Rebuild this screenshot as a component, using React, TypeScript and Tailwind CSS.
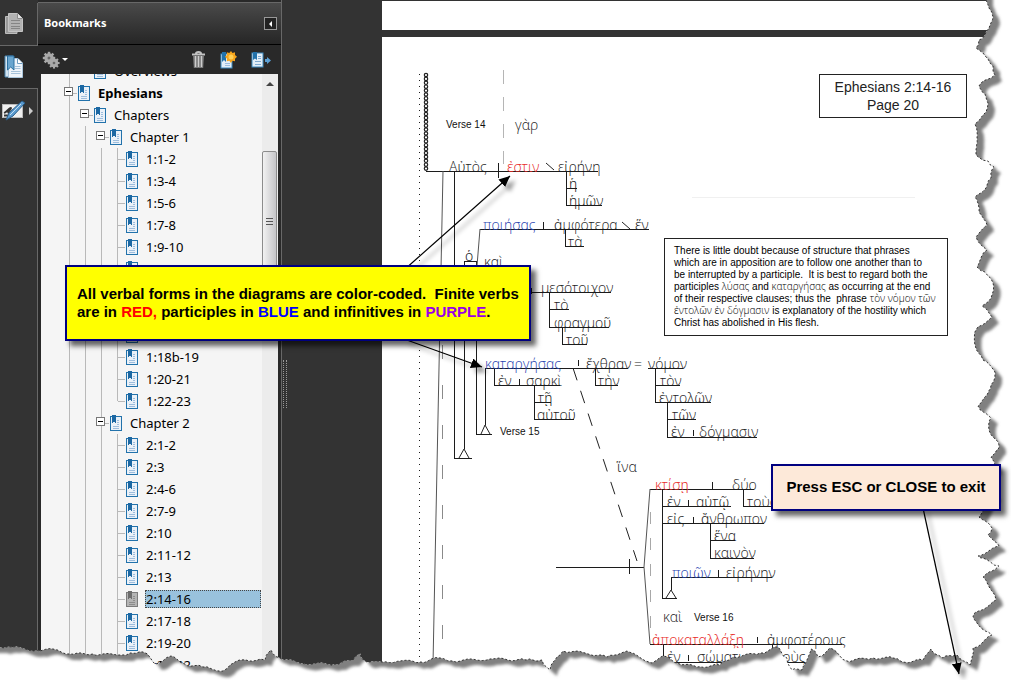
import type { ReactNode } from 'react';

type Guide = 'line' | 'none' | 'branch' | 'last' | 'open' | 'openFirst';

type Bookmark = {
  label: string;
  guides: Guide[];
  bold?: boolean;
  selected?: boolean;
};

const leaf = (label: string, last = false): Bookmark => ({
  label,
  guides: ['line', 'line', 'line', last ? 'last' : 'branch'],
});

const bookmarks: Bookmark[] = [
  { label: 'Overviews', guides: ['line', 'none'] },
  { label: 'Ephesians', guides: ['open'], bold: true },
  { label: 'Chapters', guides: ['line', 'openFirst'] },
  { label: 'Chapter 1', guides: ['line', 'line', 'openFirst'] },
  leaf('1:1-2'),
  leaf('1:3-4'),
  leaf('1:5-6'),
  leaf('1:7-8'),
  leaf('1:9-10'),
  leaf(''),
  leaf(''),
  leaf(''),
  leaf(''),
  leaf('1:18b-19'),
  leaf('1:20-21'),
  leaf('1:22-23', true),
  { label: 'Chapter 2', guides: ['line', 'line', 'open'] },
  leaf('2:1-2'),
  leaf('2:3'),
  leaf('2:4-6'),
  leaf('2:7-9'),
  leaf('2:10'),
  leaf('2:11-12'),
  leaf('2:13'),
  { ...leaf('2:14-16'), selected: true },
  leaf('2:17-18'),
  leaf('2:19-20'),
  leaf('2:21-22'),
];

const RED = '#e8291f';
const BLUE = '#1f42b0';
const INK = '#1a1a1a';

// [text, x, rule line below it, colour]
const words: [string, number, number, string?][] = [
  ['γὰρ', 515, 129],
  ['Αὐτὸς', 449, 171],
  ['ἐστιν', 507, 171, RED],
  ['εἰρήνη', 558, 171],
  ['ἡ', 569, 188],
  ['ἡμῶν', 569, 205],
  ['ποιήσας', 483, 229, BLUE],
  ['ἀμφότερα', 554, 229],
  ['ἕν', 635, 229],
  ['τὰ', 568, 246],
  ['ὁ', 465, 260],
  ['καὶ', 484, 266],
  ['μεσότοιχον', 541, 292],
  ['τὸ', 554, 309],
  ['φραγμοῦ', 554, 327],
  ['τοῦ', 566, 344],
  ['καταργήσας', 485, 368, BLUE],
  ['ἔχθραν', 586, 368],
  ['=', 634, 368],
  ['νόμον', 648, 368],
  ['ἐν', 498, 385],
  ['σαρκὶ', 526, 385],
  ['τὴν', 598, 385],
  ['τὸν', 660, 385],
  ['τῇ', 538, 402],
  ['αὐτοῦ', 537, 419],
  ['ἐντολῶν', 659, 402],
  ['τῶν', 672, 419],
  ['ἐν', 671, 436],
  ['δόγμασιν', 699, 436],
  ['ἵνα', 617, 471],
  ['κτίσῃ', 655, 489, RED],
  ['δύο', 732, 489],
  ['ἐν', 667, 506],
  ['αὐτῷ', 696, 506],
  ['τοὺς', 747, 506],
  ['εἰς', 667, 523],
  ['ἄνθρωπον', 701, 523],
  ['ἕνα', 714, 540],
  ['καινὸν', 714, 557],
  ['ποιῶν', 672, 577, BLUE],
  ['εἰρήνην', 726, 577],
  ['καὶ', 663, 621],
  ['ἀποκαταλλάξῃ', 652, 644, RED],
  ['ἀμφοτέρους', 767, 644],
  ['ἐν', 667, 661],
  ['σώματι', 697, 661],
  ['τοὺς', 776, 661],
];

const verses: [string, number, number][] = [
  ['Verse 14', 446, 128],
  ['Verse 15', 500, 435],
  ['Verse 16', 694, 621],
];

const strokes = [
  'M426 171H598M498 163V178M454 171V458H472M464 265V449M476 266V434H492M485 425V368H628',
  'M464 265V261H476V265M566 171V205H602M566 188H577M480 229H649M543 222V229M565 229V246H584',
  'M531 292H611M531 288V294M549 292V327H609M549 309H569M562 327V344H587',
  'M578 360V366M595 368V385H618M494 368V385H560M519 379V385M534 385V419H574M534 402H551',
  'M648 368H683M655 368V402H711M655 385H680M667 402V437H757M667 419H696M693 430V436',
  'M650 489H754M712 482V489M743 489V506H771M662 489V598H677M662 506H731M688 500V506M662 523H764M693 517V523',
  'M710 523V558H754M710 540H735M671 590V577H772M718 570V577M556 567H644M629 559V574',
  'M650 644H842M757 637V643M663 644V662H805M688 655V661M772 644V662',
];

const rightTear = [
  [986, 0], [989, 8], [993, 17], [990, 25], [986, 32], [979, 40], [976, 48], [986, 57], [993, 66],
  [995, 75], [979, 86], [985, 94], [988, 103], [986, 112], [975, 124], [977, 138], [976, 155],
  [988, 161], [994, 167], [991, 178], [986, 188], [975, 197], [979, 212], [987, 225], [976, 237],
  [987, 250], [977, 267], [985, 272], [993, 283], [992, 295], [982, 306], [992, 317], [976, 330],
  [975, 345], [983, 360], [995, 372], [991, 385], [987, 395], [978, 406], [991, 418], [989, 430],
  [998, 442], [999, 448], [991, 457], [995, 465], [982, 480], [994, 495], [979, 517], [992, 528],
  [988, 535], [999, 546], [978, 556], [999, 566], [983, 577], [996, 600], [973, 616], [977, 623],
  [992, 635], [973, 648], [970, 665],
];

const bottomTear = [
  [957, 655], [943, 658], [931, 649], [923, 660], [903, 662], [893, 658], [873, 658], [847, 661],
  [830, 648], [818, 657], [811, 649], [802, 670], [792, 670], [787, 658], [778, 647], [760, 653],
  [733, 657], [720, 665], [697, 667], [677, 663], [663, 656], [652, 663], [627, 651], [607, 657],
  [585, 653], [563, 651], [557, 657], [550, 670], [542, 660], [526, 660], [490, 659], [453, 661],
  [440, 658], [420, 662], [400, 661], [382, 662], [367, 662], [360, 653], [353, 660], [335, 664],
  [300, 663], [280, 658], [271, 650], [265, 660], [240, 660], [230, 665], [223, 671], [203, 667],
  [185, 664], [171, 656], [155, 664], [143, 652], [130, 653], [117, 655], [93, 654], [70, 654],
  [53, 649], [40, 651], [13, 647], [0, 647],
];

// Break each long edge into short uneven steps so that it looks like torn paper.
function jagged(points: number[][]) {
  const out: string[] = [];
  let n = 0;
  points.forEach(([x, y], i) => {
    out.push(`${x} ${y}`);
    const next = points[i + 1];
    if (!next) return;
    const steps = Math.max(1, Math.round(Math.hypot(next[0] - x, next[1] - y) / 4));
    for (let s = 1; s < steps; s++) {
      n++;
      const t = s / steps;
      const dx = Math.sin(n * 12.9) * 1.2;
      const dy = Math.cos(n * 7.3) * 1.2;
      out.push(`${(x + (next[0] - x) * t + dx).toFixed(1)} ${(y + (next[1] - y) * t + dy).toFixed(1)}`);
    }
  });
  return out.join('L');
}

const tearLine = jagged([...rightTear, ...bottomTear]);
const sheet = `M-20 -20H986L${tearLine}H-20Z`;
const outside = `M-20 -40H1040V720H-20ZM-20 -40H986L${tearLine}H-20Z`;

function BookmarkIcon({ muted = false }: { muted?: boolean }) {
  const edge = muted ? '#7b7b7b' : '#2272ab';
  const fill = muted ? '#b4b4b4' : '#eaf1f8';
  return (
    <svg className="h-4 w-3 shrink-0" viewBox="0 0 12 16" shapeRendering="crispEdges" aria-hidden="true">
      <rect x="0.5" y="1.5" width="11" height="14" fill={fill} stroke={edge} />
      <path d="M7 5.5H9M7 7.5H9M7 9.5H9M3 11.5H9M3 13.5H9" stroke={muted ? '#8c8c8c' : '#9dbddd'} />
      <path d="M2 0H6V8H5V7H3V8H2Z" fill={muted ? '#6c6c6c' : '#1c68a3'} />
    </svg>
  );
}

function GuideCell({ kind }: { kind: Guide }) {
  if (kind === 'none') return <span className="w-4" />;
  if (kind === 'open' || kind === 'openFirst') {
    return (
      <span className="relative flex w-4 items-center justify-end">
        {kind === 'open' && <span className="absolute inset-y-0 left-2 w-px bg-[#b9b9b9]" />}
        <span className="h-px w-2 bg-[#b9b9b9]" />
        <button
          type="button"
          aria-label="Collapse"
          className="absolute top-[5px] left-[3px] flex h-[9px] w-[9px] items-center justify-center border border-[#777] bg-white"
        >
          <span className="h-px w-[5px] bg-black" />
        </button>
      </span>
    );
  }
  return (
    <span className="flex w-4 pl-2">
      <span className={kind === 'last' ? 'h-1/2 w-px bg-[#b9b9b9]' : 'h-full w-px bg-[#b9b9b9]'} />
      {kind !== 'line' && <span className="h-px flex-1 self-center bg-[#b9b9b9]" />}
    </span>
  );
}

function BookmarkRow({ item }: { item: Bookmark }) {
  return (
    <li className="flex h-[22px] items-stretch pl-5">
      {item.guides.map((kind, i) => (
        <GuideCell key={i} kind={kind} />
      ))}
      <a href="#page" className="flex flex-1 items-center gap-[7px] pr-px pl-px text-black">
        <BookmarkIcon muted={item.selected} />
        <span
          className={
            item.selected
              ? 'h-[18px] flex-1 border border-dotted border-[#444] bg-[#99c2dd] text-[13px] leading-4'
              : `px-px text-[13px] leading-4 ${item.bold ? 'font-bold' : ''}`
          }
        >
          {item.label}
        </span>
      </a>
    </li>
  );
}

function RailButton({ label, active = false, children }: { label: string; active?: boolean; children: ReactNode }) {
  return (
    <button
      type="button"
      aria-label={label}
      className={`flex h-[43px] w-full items-center border-b border-[#686868] pl-1 ${active ? 'bg-[#292929]' : 'border-r'}`}
    >
      {children}
    </button>
  );
}

function Rail() {
  return (
    <nav className="flex w-[38px] shrink-0 flex-col bg-[#333] pt-[3px]">
      <RailButton label="Pages">
        <svg width="22" height="24" viewBox="0 0 22 24">
          <path d="M1.500 4.500H13V21.500H1.500Z" fill="#9a9a9a" stroke="#bdbdbd" />
          <path d="M4.500 1.500H13.500L18.500 6.500V19.500H4.500Z" fill="#b2b2b2" stroke="#c4c4c4" />
          <path d="M13.500 1.500V6.500H18.500" fill="#e2e2e2" stroke="#8a8a8a" />
          <path d="M7 8.500H16M7 11.500H16M7 14.500H16M7 16.500H16" stroke="#858585" />
        </svg>
      </RailButton>
      <RailButton label="Bookmarks" active>
        <svg width="22" height="24" viewBox="0 0 22 24">
          <path d="M1 1H9V22H1Z" fill="#d3e4f1" stroke="#4d86b0" />
          <path d="M4.500 3.500H14L18.500 8V22.500H4.500Z" fill="#eef4fa" stroke="#a9c5dc" />
          <path d="M13.500 3.500V8.500H18.500" fill="#fff" stroke="#6e9cc0" />
          <path d="M11 11.500H16.500M11 13.500H16.500M7 16.500H16.500M7 18.500H16.500" stroke="#a5c2da" />
          <path d="M3.500 1H10V15L6.700 12L3.500 15Z" fill="#69a5cf" stroke="#2b6f9f" />
        </svg>
      </RailButton>
      <button type="button" aria-label="Signatures" className="flex h-[43px] items-center gap-1 border-r border-[#686868]">
        <svg width="25" height="24" viewBox="0 0 25 24">
          <rect x="2.500" y="5.500" width="20" height="13" fill="#f0f0f0" stroke="#bbb" />
          <path d="M4 14C7 13 10 8 11 9S6 14 9 14S13 10 14 11M4 16.500H10" stroke="#333" strokeWidth="1.800" fill="none" />
          <path d="M22 2L25 4L13 17L6 21L9 14Z" fill="#5b9bcf" stroke="#2c5f8a" />
          <path d="M21 5L10 16" stroke="#c5dff3" />
        </svg>
        <span className="border-y-4 border-l-4 border-y-transparent border-l-[#ccc]" />
      </button>
      <div className="flex-1 border-r border-[#686868]" />
    </nav>
  );
}

const gearTeeth = [0, 45, 90, 135, 180, 225, 270, 315];

function Gear({ x, y, scale }: { x: number; y: number; scale: number }) {
  return (
    <g transform={`translate(${x} ${y}) scale(${scale})`} fill="#a9a9a9">
      {gearTeeth.map((angle) => (
        <rect key={angle} x="-1.200" y="-6.200" width="2.400" height="4" transform={`rotate(${angle})`} />
      ))}
      <circle r="3.100" fill="#666" stroke="#a9a9a9" strokeWidth="3.200" />
    </g>
  );
}

function PanelToolbar() {
  return (
    <div className="flex h-[29px] items-center bg-[#292929] px-1">
      <button type="button" aria-label="Options" className="flex items-center gap-px">
        <svg width="19" height="18" viewBox="0 0 19 18">
          <Gear x={7} y={7} scale={1} />
          <Gear x={12} y={12} scale={0.9} />
        </svg>
        <span className="border-x-3 border-t-3 border-x-transparent border-t-white" />
      </button>
      <div className="ml-auto flex items-center gap-[14px] pr-1.5">
        <button type="button" aria-label="Delete bookmark">
          <svg width="15" height="18" viewBox="0 0 15 18">
            <path d="M2 5H13L12.200 17H2.800Z" fill="#777" />
            <path d="M4.500 5V16M7.500 5V16M10.500 5V16" stroke="#ccc" strokeWidth="1.400" />
            <path d="M5 2.500C5 0.500 10 0.500 10 2.500M1 3.500H14" stroke="#c2c2c2" strokeWidth="2" fill="none" />
          </svg>
        </button>
        <button type="button" aria-label="New bookmark">
          <svg width="17" height="18" viewBox="0 0 17 18">
            <rect x="1" y="3" width="11" height="14" fill="#e3eef7" stroke="#3d8ac0" />
            <path d="M2 1H6V11L4 9L2 11Z" fill="#2272ab" />
            <path d="M5 12.500H10M5 14.500H10" stroke="#9dbddd" />
            <path d="M11 0L12.500 2L15 1.300L15 4L17 5.800L15 7.700L15 10.300L12.500 9.800L11 12L9.300 9.800L6.800 10.300L7 7.700L5 5.800L7 4L6.800 1.300L9.300 2Z" fill="#f7a51c" />
            <circle cx="11" cy="6" r="2.500" fill="#ffcf55" />
          </svg>
        </button>
        <button type="button" aria-label="Expand current bookmark">
          <svg width="20" height="18" viewBox="0 0 20 18">
            <rect x="1" y="2" width="11" height="14" fill="#e3eef7" stroke="#3d8ac0" />
            <path d="M2 1H6V9L4 7.500L2 9Z" fill="#2272ab" />
            <path d="M7 5.500H10M7 7.500H10M4 10.500H10M4 13.500H10" stroke="#7fa9cf" />
            <path d="M14 8H16V6L20 9.500L16 13V11H14Z" fill="#5b9fd4" />
          </svg>
        </button>
      </div>
    </div>
  );
}

function BookmarksPanel() {
  return (
    <aside className="flex w-[243px] shrink-0 flex-col bg-[#292929] pt-[2px]">
      <header className="flex h-[43px] items-center justify-between border-t border-b border-t-[#686868] border-b-black bg-linear-to-b from-[#4a4a4a] to-[#262626] pr-1 pl-1.5">
        <h2 className="text-[11px] font-bold text-white">Bookmarks</h2>
        <button type="button" aria-label="Hide panel" className="flex h-[13px] w-[13px] items-center justify-center border border-[#999] bg-[#222]">
          <span className="border-y-3 border-r-3 border-y-transparent border-r-white" />
        </button>
      </header>
      <PanelToolbar />
      <div className="mr-[3px] ml-[3px] flex min-h-0 flex-1 overflow-hidden bg-[#f5f5f5]">
        <ul className="-mt-[14px] min-w-0 flex-1">
          {bookmarks.map((item, i) => (
            <BookmarkRow key={i} item={item} />
          ))}
        </ul>
        <div className="flex w-4 flex-col bg-[#ececec] pt-2">
          <span className="ml-1 w-2 border-x-4 border-b-4 border-x-transparent border-b-[#444]" />
          <div className="mt-[65px] flex h-[140px] w-[15px] flex-col items-center justify-center gap-0.5 rounded-xs border border-[#8c8c8c] bg-linear-to-r from-[#f2f2f2] to-[#c5c5c8]">
            <span className="h-px w-[7px] bg-[#555]" />
            <span className="h-px w-[7px] bg-[#555]" />
            <span className="h-px w-[7px] bg-[#555]" />
          </div>
        </div>
      </div>
    </aside>
  );
}

function Diagram() {
  return (
    <svg
      className="block font-['Open_Sans','Noto_Sans',sans-serif]"
      width="629"
      height="643"
      viewBox="382 37 629 643"
      role="img"
      aria-label="Sentence diagram of Ephesians 2:14-16"
    >
      <g fill="none" stroke="#1c1c1c" shapeRendering="crispEdges">
        {strokes.map((d) => (
          <path key={d} d={d} />
        ))}
        <path d="M692 197H915" stroke="#f0f0f0" />
        <path d="M503 70V164" stroke="#b5b5b5" strokeDasharray="14 13" />
        <path d="M442 345V664" stroke="#8a8a8a" strokeDasharray="14 26" />
        <path d="M650 512V638" stroke="#a8a8a8" strokeDasharray="12 14" />
        <path d="M419 74V664" strokeDasharray="1 5" />
      </g>
      <g fill="none" stroke="#222">
        <path d="M443 171L433 664M480 229L477 266M650 489L644 567L650 644" stroke="#555" />
        <path d="M546 163L554 170M622 222L630 229" />
        <path d="M573 368L637 561" strokeDasharray="13 11" />
        <path d="M459 458L464 449L469 458M481 434L485 425L490 434M666 598L671 590L676 598" />
        {Array.from({ length: 25 }, (_, i) => (
          <circle key={i} cx="426" cy={75 + i * 3.9} r="1.700" strokeWidth="1.200" />
        ))}
      </g>
      {/* Words rest on their rules, so the baseline sits one pixel into the stroke */}
      <g fontSize="14" fontWeight="300">
        {words.map(([text, x, y, color]) => (
          <text key={`${text}-${x}-${y}`} x={x} y={y + 1} fill={color ?? INK}>
            {text}
          </text>
        ))}
      </g>
      <g className="font-['Liberation_Sans',Arial,sans-serif]" fontSize="10" fill="#111">
        {verses.map(([text, x, y]) => (
          <text key={text} x={x} y={y}>
            {text}
          </text>
        ))}
      </g>
    </svg>
  );
}

function Greek({ children }: { children: string }) {
  return <span className="font-['Open_Sans','Noto_Sans',sans-serif] leading-none font-light text-black">{children}</span>;
}

function DocumentPage() {
  return (
    <main id="page" className="flex min-w-0 flex-1 flex-col bg-white font-['Liberation_Sans',Arial,sans-serif] text-[#222]">
      <div className="h-px bg-[#333]" />
      <div className="h-[29px]" />
      <div className="h-[7px] shrink-0 bg-[#333]" />
      <div className="relative min-h-0 flex-1 overflow-hidden">
        <Diagram />
        <h1 className="absolute top-[37px] left-[437px] w-[148px] border border-[#222] py-[3px] text-center text-sm leading-[18px]">
          Ephesians 2:14-16
          <br />
          Page 20
        </h1>
        <p className="absolute top-[201px] left-[282px] w-[284px] border border-[#222] py-[6px] pl-[9px] text-[10px] leading-[12px] whitespace-pre text-black">
          There is little doubt because of structure that phrases
          <br />
          which are in apposition are to follow one another than to
          <br />
          {'be interrupted by a participle.  It is best to regard both the'}
          <br />
          participles <Greek>λύσας</Greek> and <Greek>καταργήσας</Greek> as occurring at the end
          <br />
          {'of their respective clauses; thus the  phrase '}
          <Greek>τὸν νόμον τῶν</Greek>
          <br />
          <Greek>ἐντολῶν ἐν δόγμασιν</Greek> is explanatory of the hostility which
          <br />
          Christ has abolished in His flesh.
        </p>
      </div>
    </main>
  );
}

function TornEdge() {
  return (
    <svg className="pointer-events-none absolute inset-0 h-full w-full" viewBox="0 0 1011 680" preserveAspectRatio="none" aria-hidden="true">
      <defs>
        <clipPath id="outside">
          <path d={outside} clipRule="evenodd" />
        </clipPath>
        <filter id="soft" x="-5%" y="-5%" width="110%" height="110%">
          <feGaussianBlur stdDeviation="1.800" />
        </filter>
      </defs>
      <g clipPath="url(#outside)">
        <rect width="1011" height="680" fill="#fff" />
        <path d={sheet} transform="translate(7 6)" fill="#808080" filter="url(#soft)" />
      </g>
      <path d={`M${tearLine}`} fill="none" stroke="#333" strokeWidth="1" strokeDasharray="2 2" />
    </svg>
  );
}

function Arrows() {
  return (
    <svg className="pointer-events-none absolute top-0 left-0" width="1011" height="680" viewBox="0 0 1011 680" aria-hidden="true">
      <defs>
        <marker id="head" markerWidth="12" markerHeight="10" refX="11" refY="5" orient="auto" markerUnits="userSpaceOnUse">
          <path d="M0 0L11 5L0 10Z" />
        </marker>
        <filter id="arrowShadow" x="-20%" y="-20%" width="140%" height="140%">
          <feDropShadow dx="5" dy="5" stdDeviation="2" floodOpacity="0.400" />
        </filter>
      </defs>
      <g stroke="#000" strokeWidth="1.200" filter="url(#arrowShadow)">
        <path d="M404 270L510 176" markerEnd="url(#head)" />
        <path d="M404 339L482 367" markerEnd="url(#head)" />
        <path d="M923 508L959 674" markerEnd="url(#head)" />
      </g>
    </svg>
  );
}

export default function App() {
  return (
    <div className="relative flex h-screen min-h-[680px] overflow-hidden bg-[#333] font-['Noto_Sans',Tahoma,sans-serif]">
      <Rail />
      <BookmarksPanel />
      <div className="flex w-[101px] shrink-0 border-l border-[#686868]">
        <div className="mt-[360px] ml-px h-12 w-1 border-x border-dotted border-[#999]" />
      </div>
      <DocumentPage />
      <TornEdge />
      <Arrows />
      <div className="absolute top-[265px] left-[65px] w-[466px] border-2 border-[#000080] bg-[#ff0] py-[18px] pl-[10px] font-['Liberation_Sans',Arial,sans-serif] text-[15px] leading-[18px] font-bold whitespace-pre text-black shadow-[5px_5px_5px_rgba(0,0,0,0.600)]">
        {'All verbal forms in the diagrams are color-coded.  Finite verbs'}
        <br />
        are in <span className="text-[#f00]">RED,</span> participles in <span className="text-[#00f]">BLUE</span> and infinitives in{' '}
        <span className="text-[#9900e6]">PURPLE</span>.
      </div>
      <button
        type="button"
        className="absolute top-[464px] left-[771px] h-[47px] w-[230px] border-2 border-[#000080] bg-[#fde9d9] font-['Liberation_Sans',Arial,sans-serif] text-[15px] font-bold text-black shadow-[5px_5px_5px_rgba(0,0,0,0.600)]"
      >
        Press ESC or CLOSE to exit
      </button>
    </div>
  );
}
